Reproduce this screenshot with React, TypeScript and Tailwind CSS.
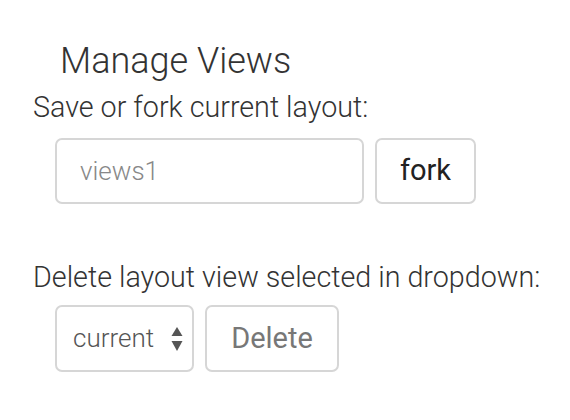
export default function App() {
  return (
    <div className="w-[570px] h-[420px] bg-white pl-[33px] pt-[39px] font-['Roboto',sans-serif] font-light text-[#222]">
      <h3 className="pl-[27px] text-[36px] leading-[44px] font-light text-[#333]">Manage Views</h3>
      <p className="mt-[6px] text-[28.7px] leading-[36px] text-[#333]">Save or fork current layout:</p>
      <div className="mt-[13px] ml-[22px] flex gap-[11px]">
        <input
          defaultValue=""
          placeholder="views1"
          className="w-[309px] h-[66px] rounded-[7px] border-2 border-[#d6d6d6] px-[23px] text-[26px] font-light text-[#333] placeholder:text-[#888] outline-none"
        />
        <button className="w-[101px] h-[66px] rounded-[7px] border-2 border-[#d6d6d6] bg-white text-[29px] font-normal text-[#222]">
          fork
        </button>
      </div>
      <p className="mt-[55px] text-[28.7px] leading-[36px] text-[#333]">Delete layout view selected in dropdown:</p>
      <div className="mt-[10px] ml-[22px] flex gap-[11px]">
        <div className="w-[139px] h-[67px] rounded-[7px] border-2 border-[#d6d6d6] flex items-center pl-[16px] pr-[8px] justify-between">
          <span className="text-[26px] font-light text-[#555]">current</span>
          <svg width="12" height="26" viewBox="0 0 12 26" className="mr-[1px]">
            <path d="M6 1 L11.5 10 L0.5 10 Z" fill="#555" />
            <path d="M6 25 L11.5 15 L0.5 15 Z" fill="#555" />
          </svg>
        </div>
        <button className="w-[134px] h-[67px] rounded-[7px] border-2 border-[#d6d6d6] bg-white text-[29px] font-normal text-[#777]">
          Delete
        </button>
      </div>
    </div>
  );
}
